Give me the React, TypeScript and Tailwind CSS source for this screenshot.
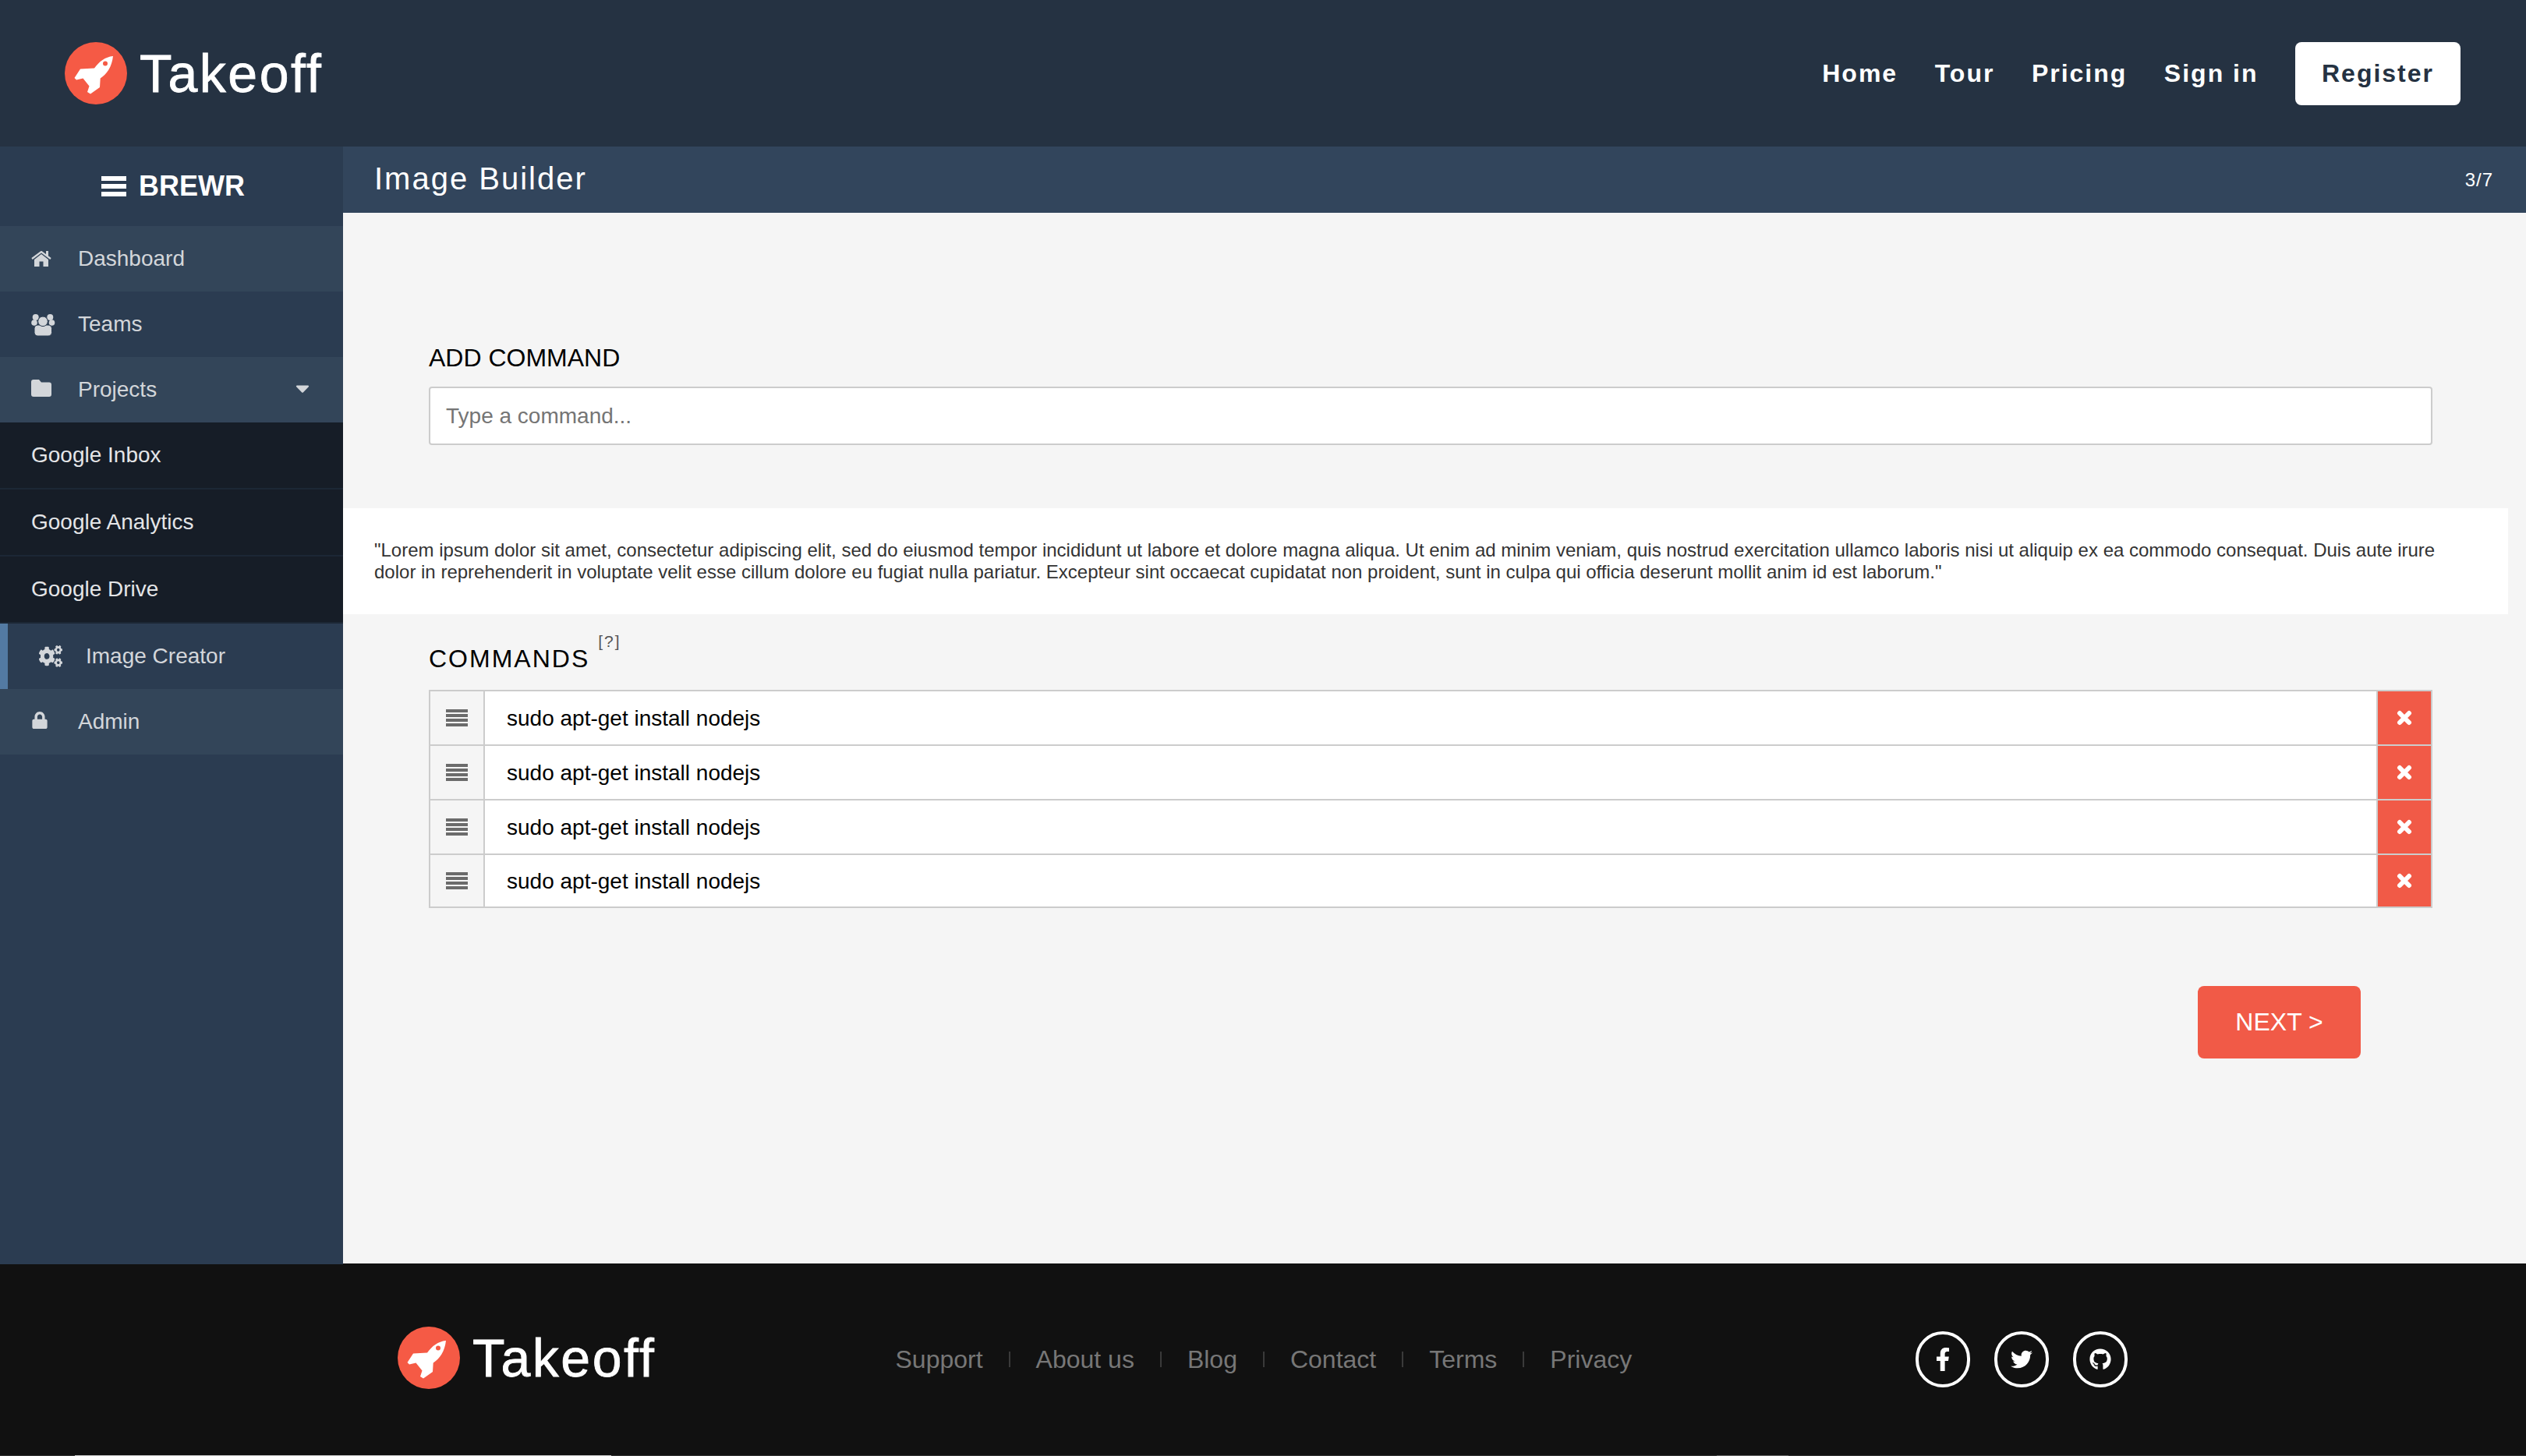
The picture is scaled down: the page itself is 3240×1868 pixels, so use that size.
import { FaCaretDown, FaCogs, FaFacebookF, FaGithub, FaLock, FaTwitter } from "react-icons/fa";
import type { ReactNode } from "react";

const footerLinks = ["Support", "About us", "Blog", "Contact", "Terms", "Privacy"];
const subLinks = ["Google Inbox", "Google Analytics", "Google Drive"];

function Rocket() {
  return (
    <svg viewBox="0 0 80 80" className="h-20 w-20 shrink-0">
      <circle cx="40" cy="40" r="40" fill="#f55a45" />
      <path
        d="M62 18C52 19 44 25 38 33.500L20 34.500L12.500 46L15 48.500L23.500 46.500L31.500 56.500L29 64L33 66.500L45 58L45.700 46.500C54 41 60.500 32 62 18Z"
        fill="#fff"
      />
      <circle cx="52" cy="27.500" r="3" fill="#f55a45" />
    </svg>
  );
}

function Logo() {
  return (
    <div className="flex items-center gap-4">
      <Rocket />
      <span className="text-[68px] leading-none tracking-[2.500px] text-white [-webkit-text-stroke:0.8px_white]">
        Takeoff
      </span>
    </div>
  );
}

function HomeIcon() {
  return (
    <svg viewBox="0 0 26 20" className="h-5 w-[26px]" fill="currentColor">
      <path d="M1 10L13 1L25 10" fill="none" stroke="currentColor" strokeWidth="2.200" />
      <path d="M19 0h3v7l-3-2z" />
      <path d="M13 4L22 11V20H15.500V13.500H10.500V20H4V11Z" />
    </svg>
  );
}

function TeamIcon() {
  return (
    <svg viewBox="0 0 31 29" className="h-[29px] w-[31px]" fill="currentColor">
      <circle cx="5.700" cy="5" r="4" />
      <circle cx="24.300" cy="5" r="4" />
      <circle cx="4" cy="12" r="3.800" />
      <circle cx="26.500" cy="12" r="3.800" />
      <rect x="4" y="15" width="22.500" height="14" rx="4.500" stroke="#2b3c51" />
      <circle cx="15" cy="10.300" r="6.300" stroke="#2b3c51" />
    </svg>
  );
}

function FolderIcon() {
  return (
    <svg viewBox="0 0 26 22" className="-mt-1 h-[22px] w-[26px]" fill="currentColor">
      <path d="M3 0h7l3 3.500h10a3 3 0 0 1 3 3V19a3 3 0 0 1-3 3H3a3 3 0 0 1-3-3V3a3 3 0 0 1 3-3z" />
    </svg>
  );
}

function NavItem({
  icon,
  label,
  active = false,
  light = false,
  caret = false,
}: {
  icon: ReactNode;
  label: string;
  active?: boolean;
  light?: boolean;
  caret?: boolean;
}) {
  return (
    <div
      className={`flex h-[84px] items-center text-[28px] text-[#d3d6da] ${
        active ? "border-l-[10px] border-[#537aa3] pl-[40px]" : "pl-[40px]"
      } ${light ? "bg-[#334559]" : "bg-[#2b3c51]"}`}
    >
      <span className="flex w-[60px] items-center text-[#d3d6da]">{icon}</span>
      <span>{label}</span>
      {caret && <FaCaretDown className="-mt-1 ml-auto mr-[38px] text-[28px] text-[#d3d6da]" />}
    </div>
  );
}

function Sidebar() {
  return (
    <aside className="flex w-[440px] shrink-0 flex-col bg-[#2b3c51]">
      <div className="flex h-[102px] items-center justify-center gap-4 pl-1 text-[36px] font-bold text-white">
        <div className="flex flex-col gap-1">
          <i className="h-1.5 w-8 bg-white" />
          <i className="h-1.5 w-8 bg-white" />
          <i className="h-1.5 w-8 bg-white" />
        </div>
        <span>BREWR</span>
      </div>
      <NavItem light icon={<HomeIcon />} label="Dashboard" />
      <NavItem icon={<TeamIcon />} label="Teams" />
      <NavItem light caret icon={<FolderIcon />} label="Projects" />
      {subLinks.map((link) => (
        <div
          key={link}
          className="flex h-[86px] items-center border-b-2 border-[#1c2735] bg-[#161d27] pl-[40px] text-[28px] text-[#e4e5e7]"
        >
          {link}
        </div>
      ))}
      <NavItem active icon={<FaCogs preserveAspectRatio="none" className="h-7 w-[30px]" />} label="Image Creator" />
      <NavItem light icon={<FaLock className="-mt-1 text-[22px]" />} label="Admin" />
    </aside>
  );
}

function CommandRow({ last }: { last: boolean }) {
  return (
    <div className={`flex ${last ? "h-[66px]" : "h-[70px] border-b-2 border-[#cccccc]"}`}>
      <div className="flex w-[70px] flex-col items-center justify-center gap-[2px] border-r-2 border-[#cccccc]">
        <i className="h-1 w-7 bg-[#6b6b6b]" />
        <i className="h-1 w-7 bg-[#6b6b6b]" />
        <i className="h-1 w-7 bg-[#6b6b6b]" />
        <i className="h-1 w-7 bg-[#6b6b6b]" />
      </div>
      <div className="flex flex-1 items-center bg-white pl-7 pt-[2px] text-[28px] text-black">
        sudo apt-get install nodejs
      </div>
      <div className="flex w-[70px] items-center justify-center border-l-2 border-[#cccccc] bg-[#f15a47] text-white">
        <svg viewBox="0 0 20 20" className="h-5 w-5" stroke="currentColor" strokeWidth="6" strokeLinecap="round">
          <path d="M4 4L16 16M16 4L4 16" />
        </svg>
      </div>
    </div>
  );
}

export default function App() {
  return (
    <div className="w-[3240px] bg-[#f5f5f5] font-['Liberation_Sans',sans-serif]">
      <header className="flex h-[188px] items-center justify-between bg-[#253242] pl-[83px] pr-[84px]">
        <Logo />
        <nav className="flex items-center text-[32px] font-bold tracking-[2px] text-white">
          <a className="mr-[47.500px]">Home</a>
          <a className="mr-[47.500px]">Tour</a>
          <a className="mr-[47.500px]">Pricing</a>
          <a className="mr-[47.500px]">Sign in</a>
          <a className="flex h-[81px] w-[212px] items-center justify-center rounded-lg bg-white text-[#253242]">
            Register
          </a>
        </nav>
      </header>

      <div className="flex h-[1433px]">
        <Sidebar />
        <main className="flex-1">
          <div className="flex h-[85px] items-center justify-between bg-[#32455c] pl-10 pr-[42px] text-white">
            <h1 className="pb-[3px] text-[40px] tracking-[2px]">Image Builder</h1>
            <span className="text-[24px] tracking-[1px]">3/7</span>
          </div>

          <div className="pl-[110px] pr-[120px] pt-[168px]">
            <h2 className="text-[32px] leading-[37px] text-black">ADD COMMAND</h2>
            <div className="mt-[18px] flex h-[75px] items-center rounded-sm border-2 border-[#cccccc] bg-white px-5 text-[28px] text-[#757575]">
              Type a command...
            </div>
          </div>

          <p className="mr-[23px] mt-[81px] bg-white px-10 py-[40px] text-[24px] leading-[28px] text-[#333333]">
            "Lorem ipsum dolor sit amet, consectetur adipiscing elit, sed do eiusmod tempor incididunt ut labore et dolore magna aliqua. Ut enim ad minim veniam, quis nostrud exercitation ullamco laboris nisi ut aliquip ex ea commodo consequat. Duis aute irure dolor in reprehenderit in voluptate velit esse cillum dolore eu fugiat nulla pariatur. Excepteur sint occaecat cupidatat non proident, sunt in culpa qui officia deserunt mollit anim id est laborum."
          </p>

          <div className="pl-[110px] pr-[120px]">
            <h2 className="mt-[20px] flex h-[77px] items-end pb-[21px] text-[32px] leading-[37px] tracking-[2px] text-black">
              COMMANDS
              <span className="mb-[31px] ml-[11px] text-[21px] leading-none text-[#555555]">[?]</span>
            </h2>
            <div className="border-2 border-[#cccccc]">
              {[0, 1, 2, 3].map((i) => (
                <CommandRow key={i} last={i === 3} />
              ))}
            </div>
            <div className="mt-[100px] flex justify-end pr-[92px]">
              <button className="h-[93px] w-[209px] rounded-lg bg-[#f15a47] pb-[2px] text-[32px] text-white">
                NEXT &gt;
              </button>
            </div>
          </div>
        </main>
      </div>

      <footer className="relative flex h-[246px] items-center bg-[#111111] pl-[510px] before:absolute before:left-0 before:top-0 before:h-px before:w-[440px] before:bg-[#2b3c51]">
        <div className="mb-[5px]">
          <Logo />
        </div>
        <div className="ml-[307px] flex items-center text-[32px] text-[#777777]">
          {footerLinks.map((link, i) => (
            <span key={link} className="flex items-center">
              {i > 0 && <i className="mx-[33px] h-5 w-[2px] bg-[#3a3a3a]" />}
              {link}
            </span>
          ))}
        </div>
        <div className="ml-[364px] flex gap-[31px] text-white">
          <span className="flex h-[72px] w-[70px] items-center justify-center rounded-full border-4 border-white text-[30px]"><FaFacebookF /></span>
          <span className="flex h-[72px] w-[70px] items-center justify-center rounded-full border-4 border-white text-[28px]"><FaTwitter /></span>
          <span className="flex h-[72px] w-[70px] items-center justify-center rounded-full border-4 border-white text-[28px]"><FaGithub /></span>
        </div>
      </footer>
      <div className="flex h-px bg-[#333333]">
        <i className="ml-[96px] w-[688px] bg-[#cccccc]" />
        <i className="ml-[1418px] w-[92px] bg-[#666666]" />
      </div>
    </div>
  );
}
